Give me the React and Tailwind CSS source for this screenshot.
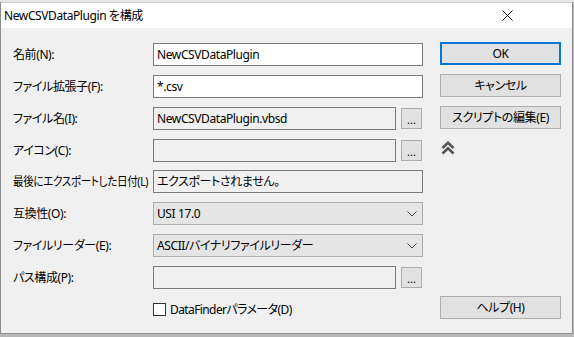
import React from "react";

const F = "font-['Noto_Sans','Noto_Sans_CJK_JP',sans-serif] [font-feature-settings:'palt']";

function Label({ children, className = "" }) {
  return (
    <div className="w-[140px] shrink-0 whitespace-nowrap text-[12px] leading-none text-black overflow-visible">
      <span className={`inline-block tracking-[-0.4px] ${className}`}>{children}</span>
    </div>
  );
}

function TextBox({ value = "", w = "w-[270px]", bg = "bg-white", border = "border-[#7a7a7a]" }) {
  return (
    <div className={`${w} h-[23px] ${bg} border ${border} flex items-center pl-[3px] text-[12px] tracking-[-0.4px] text-black whitespace-nowrap overflow-hidden`}>
      {value}
    </div>
  );
}

function Dots() {
  return (
    <div className="ml-[5px] w-[21px] h-[21px] bg-[#e1e1e1] border border-[#adadad] flex items-end justify-center pb-[3px] text-[11px] leading-none text-black">
      ...
    </div>
  );
}

function Select({ value }) {
  return (
    <div className="w-[270px] h-[23px] bg-[#e5e5e5] border border-[#adadad] flex items-center justify-between pl-[3px] pr-[5px] text-[12px] tracking-[-0.4px] text-black whitespace-nowrap">
      <span>{value}</span>
      <svg width="10" height="6" viewBox="0 0 10 6">
        <polyline points="0.5,0.5 5,5 9.5,0.5" fill="none" stroke="#444" strokeWidth="1" />
      </svg>
    </div>
  );
}

function Btn({ children, primary = false, className = "" }) {
  return (
    <div
      className={`w-[121px] h-[23px] bg-[#e1e1e1] flex items-center justify-center text-[12px] tracking-[-0.4px] text-black whitespace-nowrap ${
        primary ? "border-2 border-[#0078d7]" : "border border-[#adadad]"
      } ${className}`}
    >
      {children}
    </div>
  );
}

function Row({ className = "", children }) {
  return <div className={`h-[23px] flex items-center ${className}`}>{children}</div>;
}

export default function App() {
  return (
    <div className={`w-[574px] h-[337px] bg-[#b8b8b8] overflow-hidden ${F}`}>
      <div className="h-[2px] bg-[#e6e6e6]" />
      <div className="w-[573px] h-[332px] border-x border-b border-[#8c8c8c] bg-[#f0f0f0] flex flex-col">
        <div className="h-[26px] bg-white flex items-center justify-between pl-[3px] pr-[59px] border-t border-[#d0d0d0]">
          <span className="text-[12px] tracking-[-0.4px] text-black">NewCSVDataPlugin を構成</span>
          <svg width="11" height="11" viewBox="0 0 11 11">
            <path d="M0.5 0.5 L10.5 10.5 M10.5 0.5 L0.5 10.5" stroke="#000" strokeWidth="1" />
          </svg>
        </div>
        <div className="flex flex-1">
          <div className="pl-[12px] pt-[15px] w-[422px] flex flex-col">
            <Row>
              <Label>名前(N):</Label>
              <TextBox value="NewCSVDataPlugin" />
            </Row>
            <Row className="mt-[9px]">
              <Label>ファイル拡張子(F):</Label>
              <TextBox value="*.csv" />
            </Row>
            <Row className="mt-[9px]">
              <Label>ファイル名(I):</Label>
              <TextBox value="NewCSVDataPlugin.vbsd" w="w-[243px]" bg="bg-[#f0f0f0]" />
              <Dots />
            </Row>
            <Row className="mt-[9px]">
              <Label>アイコン(C):</Label>
              <TextBox w="w-[243px]" bg="bg-[#f0f0f0]" />
              <Dots />
            </Row>
            <Row className="mt-[8px]">
              <Label className="origin-left scale-x-[0.88] tracking-[-0.3px]">最後にエクスポートした日付(L)</Label>
              <TextBox value="エクスポートされません。" bg="bg-[#f0f0f0]" />
            </Row>
            <Row className="mt-[9px]">
              <Label>互換性(O):</Label>
              <Select value="USI 17.0" />
            </Row>
            <Row className="mt-[9px]">
              <Label>ファイルリーダー(E):</Label>
              <Select value="ASCII/バイナリファイルリーダー" />
            </Row>
            <Row className="mt-[9px]">
              <Label>パス構成(P):</Label>
              <TextBox w="w-[243px]" bg="bg-[#f0f0f0]" />
              <Dots />
            </Row>
            <Row className="mt-[9px]">
              <div className="w-[140px] shrink-0" />
              <div className="w-[13px] h-[13px] bg-white border border-[#333]" />
              <span className="ml-[4px] text-[12px] text-black whitespace-nowrap tracking-[-0.6px]">DataFinderパラメータ(D)</span>
            </Row>
          </div>
          <div className="ml-[17px] pt-[14px] flex flex-col">
            <Btn primary>OK</Btn>
            <Btn className="mt-[9px]">キャンセル</Btn>
            <Btn className="mt-[9px]">スクリプトの編集(E)</Btn>
            <div className="mt-[12px] ml-[1px]">
              <svg width="14" height="14" viewBox="0 0 14 14">
                <polyline points="1.5,7 7,1.8 12.5,7" fill="none" stroke="#555" strokeWidth="2.6" />
                <polyline points="1.5,12.5 7,7.3 12.5,12.5" fill="none" stroke="#555" strokeWidth="2.6" />
              </svg>
            </div>
            <Btn className="mt-[141px]">ヘルプ(H)</Btn>
          </div>
        </div>
      </div>
    </div>
  );
}
